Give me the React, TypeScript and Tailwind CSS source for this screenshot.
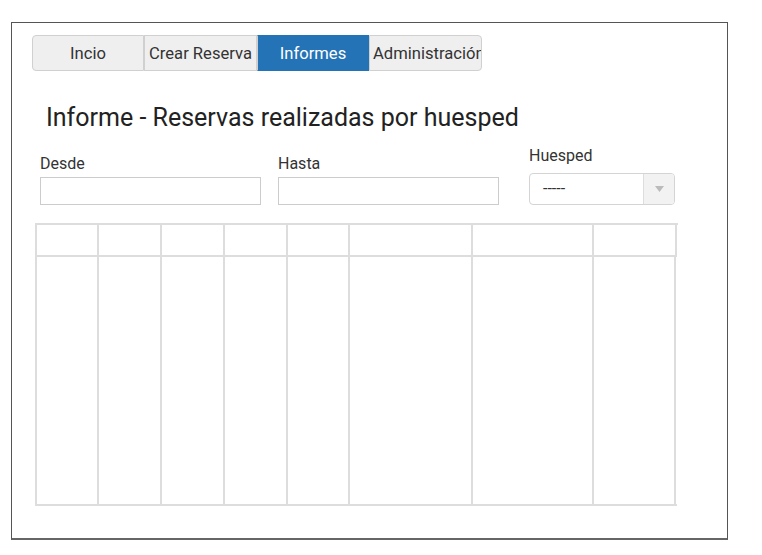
import React from 'react';

const tabs = ['Incio', 'Crear Reserva', 'Informes', 'Administración'];
const tabWidths = [112, 113, 112, 113];
const cols = [62, 63, 63, 63, 62, 123, 121, 85];

export default function App() {
  return (
    <div className="w-[762px] h-[555px] bg-white pt-[22px] pl-[11px]" style={{ fontFamily: 'Roboto, "Liberation Sans", sans-serif' }}>
      <div className="w-[717px] h-[518px] border border-[#555] border-b-2 border-b-[#666] pt-[12px] pl-[20px] relative">
        {/* tabs */}
        <div className="flex h-[36px]">
          {tabs.map((t, i) => {
            const active = i === 2;
            return (
              <div
                key={t}
                style={{ width: tabWidths[i] }}
                className={
                  'h-[36px] flex items-center justify-center overflow-hidden whitespace-nowrap text-[16.6px] border ' +
                  (active
                    ? 'bg-[#2473b6] border-[#2473b6] text-white'
                    : 'bg-[#efefef] border-[#d0d0d0] text-[#333]') +
                  (i === 0 ? ' rounded-l-[4px]' : '') +
                  (i === 3 ? ' rounded-r-[4px] justify-start pl-[3px]' : '') +
                  (i > 0 && i < 3 ? ' border-l-[#d0d0d0]' : '')
                }
              >
                <span className="pt-[2px]">{t}</span>
              </div>
            );
          })}
        </div>

        <h1 className="ml-[14px] mt-[32px] text-[25px] leading-[30px] text-[#222]">
          Informe - Reservas realizadas por huesped
        </h1>

        {/* filters */}
        <div className="flex mt-[13px] ml-[8px]">
          <div className="flex flex-col mt-[8px]">
            <label className="text-[16px] leading-[20px] text-[#333]">Desde</label>
            <input className="mt-[3px] w-[221px] h-[28px] border border-[#ccc] outline-none" />
          </div>
          <div className="flex flex-col mt-[8px] ml-[17px]">
            <label className="text-[16px] leading-[20px] text-[#333]">Hasta</label>
            <input className="mt-[3px] w-[221px] h-[28px] border border-[#ccc] outline-none" />
          </div>
          <div className="flex flex-col ml-[30px]">
            <label className="text-[16px] leading-[20px] text-[#333]">Huesped</label>
            <div className="mt-[7px] w-[146px] h-[32px] border border-[#d4d4d4] rounded-[4px] flex overflow-hidden">
              <div className="flex-1 flex items-center pl-[13px] text-[16px] text-[#333]">-----</div>
              <div className="w-[31px] bg-[#f2f2f2] border-l border-[#ddd] flex items-center justify-center">
                <svg width="9" height="6" viewBox="0 0 9 6">
                  <path d="M0 0 L9 0 L4.5 6 Z" fill="#bbb" />
                </svg>
              </div>
            </div>
          </div>
        </div>

        {/* table */}
        <div className="mt-[18px] ml-[3px] w-[643px]">
          <div className="flex h-[34px] border-t-2 border-[#ddd]">
            {cols.map((w, i) => (
              <div
                key={i}
                style={{ width: w }}
                className={'h-full border-l-2 border-b-2 border-[#ddd]' + (i === cols.length - 1 ? ' border-r-2' : '')}
              />
            ))}
          </div>
          <div className="flex h-[249px] w-[642px] border-b-2 border-[#ddd]">
            {cols.map((w, i) => (
              <div
                key={i}
                style={{ width: i === cols.length - 1 ? w - 1 : w }}
                className={'h-full border-l-2 border-[#ddd]' + (i === cols.length - 1 ? ' border-r-2' : '')}
              />
            ))}
          </div>
        </div>
      </div>
    </div>
  );
}
